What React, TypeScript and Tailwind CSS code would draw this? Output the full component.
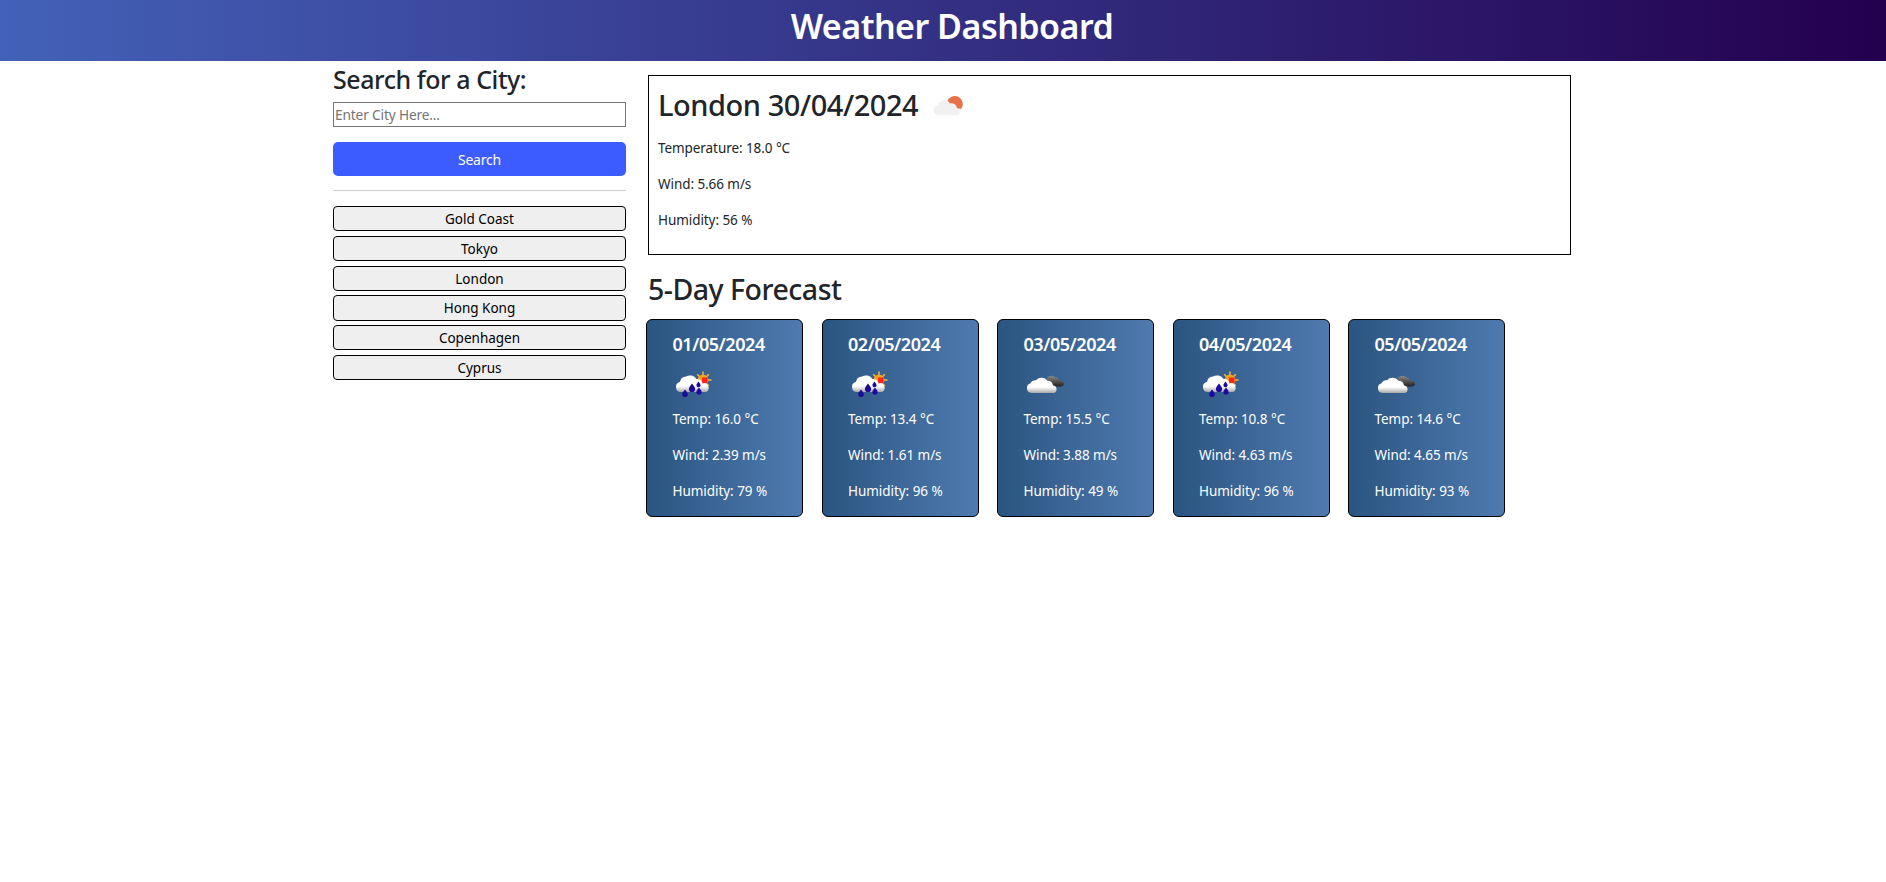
const font = { fontFamily: '"Noto Sans", sans-serif' };

function RainIcon() {
  return (
    <svg width="40" height="30" viewBox="0 0 40 30" className="block">
      <defs>
        <linearGradient id="cl" x1="0" y1="0" x2="0" y2="1">
          <stop offset="0.65" stopColor="#ffffff" />
          <stop offset="1" stopColor="#a9a9a9" />
        </linearGradient>
      </defs>
      <g stroke="#f4b73f" strokeWidth="1.5">
        <path d="M27 1.5 L27 18 M19 10 L35.5 10 M21.2 4.2 L32.8 15.8 M32.8 4.2 L21.2 15.8" />
      </g>
      <circle cx="27" cy="10" r="5.4" fill="#f7a11c" />
      <path d="M26 7.5 h5.5 v6 h-5.5z" fill="#f5291a" />
      <path d="M5 22 a5 5 0 0 1 -1 -9.9 a6.5 6.5 0 0 1 6 -5.5 a7.5 7.5 0 0 1 10.5 2.5 a5 5 0 0 1 6 4.5 a4 4 0 0 1 6 3.4 c.6 3 -1.2 5 -3 5z" fill="url(#cl)" />
      <path d="M9 19.5 c1.7 2.3 2.8 3.6 2.8 4.8 a2.8 2.8 0 0 1 -5.6 0 c0 -1.2 1.1 -2.5 2.8 -4.8z" fill="#1c0a9c" />
      <path d="M16 13.5 c2 2.6 3.1 4.1 3.1 5.4 a3.1 3.1 0 0 1 -6.2 0 c0 -1.3 1.1 -2.8 3.1 -5.4z" fill="#1c0a9c" />
      <path d="M22.5 11.5 c1.3 1.8 2.1 2.8 2.1 3.7 a2.1 2.1 0 0 1 -4.2 0 c0 -.9 .8 -1.9 2.1 -3.7z" fill="#1c0a9c" />
      <path d="M23 17.5 c1.6 2.1 2.6 3.3 2.6 4.4 a2.6 2.6 0 0 1 -5.2 0 c0 -1.1 1 -2.3 2.6 -4.4z" fill="#1c0a9c" />
    </svg>
  );
}

function CloudIcon() {
  return (
    <svg width="40" height="30" viewBox="0 0 40 30" className="block">
      <defs>
        <linearGradient id="cw" x1="0" y1="0" x2="0" y2="1">
          <stop offset="0.62" stopColor="#ffffff" />
          <stop offset="1" stopColor="#a8a8a8" />
        </linearGradient>
        <linearGradient id="cd" x1="0" y1="0" x2="0" y2="1">
          <stop offset="0" stopColor="#8a8a8a" />
          <stop offset="1" stopColor="#222222" />
        </linearGradient>
      </defs>
      <path d="M19 11 a5.5 5.5 0 0 1 9 -4 a4.2 4.2 0 0 1 4 3.5 c3 .2 5 1.7 5 3.2 c0 1.7 -1.5 2.8 -3.5 2.8 h-12z" fill="url(#cd)" />
      <path d="M4.5 23 a5 5 0 0 1 -1 -9.8 a5.5 5.5 0 0 1 5.5 -3 a7.5 7.5 0 0 1 11.5 .5 a5.5 5.5 0 0 1 5.5 4.8 a3.8 3.8 0 0 1 3.5 3.2 c.4 2.6 -1 4.3 -3 4.3z" fill="url(#cw)" />
    </svg>
  );
}

function SunCloudIcon() {
  return (
    <svg width="34" height="24" viewBox="0 0 34 24" className="block">
      <path d="M14 8 a8 8 0 1 1 14 7 l-10 -2z" fill="#e8734a" />
      <path d="M5 21 a4.5 4.5 0 0 1 0 -9 a6.5 6.5 0 0 1 12 -2.5 a5.5 5.5 0 0 1 7 5 a3.5 3.5 0 0 1 1 6.5z" fill="#f1f1f1" />
    </svg>
  );
}

const cities = ["Gold Coast", "Tokyo", "London", "Hong Kong", "Copenhagen", "Cyprus"];
const days = [
  { d: "01/05/2024", i: "rain", t: "16.0", w: "2.39", h: "79" },
  { d: "02/05/2024", i: "rain", t: "13.4", w: "1.61", h: "96" },
  { d: "03/05/2024", i: "cloud", t: "15.5", w: "3.88", h: "49" },
  { d: "04/05/2024", i: "rain", t: "10.8", w: "4.63", h: "96" },
  { d: "05/05/2024", i: "cloud", t: "14.6", w: "4.65", h: "93" },
];

export default function App() {
  return (
    <div className="min-h-[882px] bg-white text-[#212529]" style={font}>
      <header className="h-[61px] flex justify-center pl-[18px] pt-[3px] text-white text-[34px] leading-[46px] font-semibold tracking-[-0.5px] bg-[linear-gradient(to_right,#4361b8,#24004f)]">
        Weather Dashboard
      </header>
      <div className="flex w-[1238px] ml-[333px]">
        <aside className="w-[293px] shrink-0 flex flex-col">
          <h2 className="text-[25px] font-medium leading-[29px] mt-[4px] mb-[8px] tracking-[-0.45px]">Search for a City:</h2>
          <input
            placeholder="Enter City Here..."
            className="h-[25px] w-full border border-[#767676] px-[1px] text-[13.7px] tracking-[-0.15px] placeholder:text-[#757575]"
          />
          <button className="h-[34px] mt-[15px] rounded-[5px] bg-[#3d5cff] text-white text-[14px] tracking-[-0.2px]">Search</button>
          <div className="h-[1px] bg-[#cccccc] mt-[14px] mb-[15px]" />
          <div className="flex flex-col gap-[4.6px]">
            {cities.map((c) => (
              <button key={c} className="h-[25.2px] rounded-[4px] border border-black bg-[#efefef] text-black text-[13.5px] font-normal pt-[1px]">
                {c}
              </button>
            ))}
          </div>
        </aside>
        <main className="ml-[20px] flex-1 min-w-0">
          <section className="ml-[2px] mt-[14px] h-[180px] border border-black pl-[9px] pt-[9px]">
            <div className="flex items-center h-[39px]">
              <h2 className="text-[29px] font-medium tracking-[-0.45px] leading-[39px]">London 30/04/2024</h2>
              <span className="ml-[15px] mt-[3px]"><SunCloudIcon /></span>
            </div>
            <div className="text-[13.5px] tracking-[-0.07px] leading-[20px] mt-[14px] flex flex-col gap-[16px]">
              <p>Temperature: 18.0 °C</p>
              <p>Wind: 5.66 m/s</p>
              <p>Humidity: 56 %</p>
            </div>
          </section>
          <h2 className="ml-[2px] mt-[17px] text-[28.5px] font-medium tracking-[-0.5px] leading-[34px]">5-Day Forecast</h2>
          <div className="flex gap-[18.5px] mt-[13px]">
            {days.map((x) => (
              <div key={x.d} className="w-[157px] h-[198px] rounded-[6px] border border-black pl-[25.5px] pt-[12px] text-white bg-[linear-gradient(to_right,#2a5580,#4f7ab0)]">
                <h5 className="text-[18px] font-semibold leading-[24px] tracking-[-0.45px]">{x.d}</h5>
                <div className="mt-[4px] h-[48px] pl-[3.5px] pt-[10px]">{x.i === "rain" ? <RainIcon /> : <CloudIcon />}</div>
                <div className="text-[13.5px] tracking-[-0.05px] leading-[20px] mt-[1px] flex flex-col gap-[16px]">
                  <p>Temp: {x.t} °C</p>
                  <p>Wind: {x.w} m/s</p>
                  <p>Humidity: {x.h} %</p>
                </div>
              </div>
            ))}
          </div>
        </main>
      </div>
    </div>
  );
}
